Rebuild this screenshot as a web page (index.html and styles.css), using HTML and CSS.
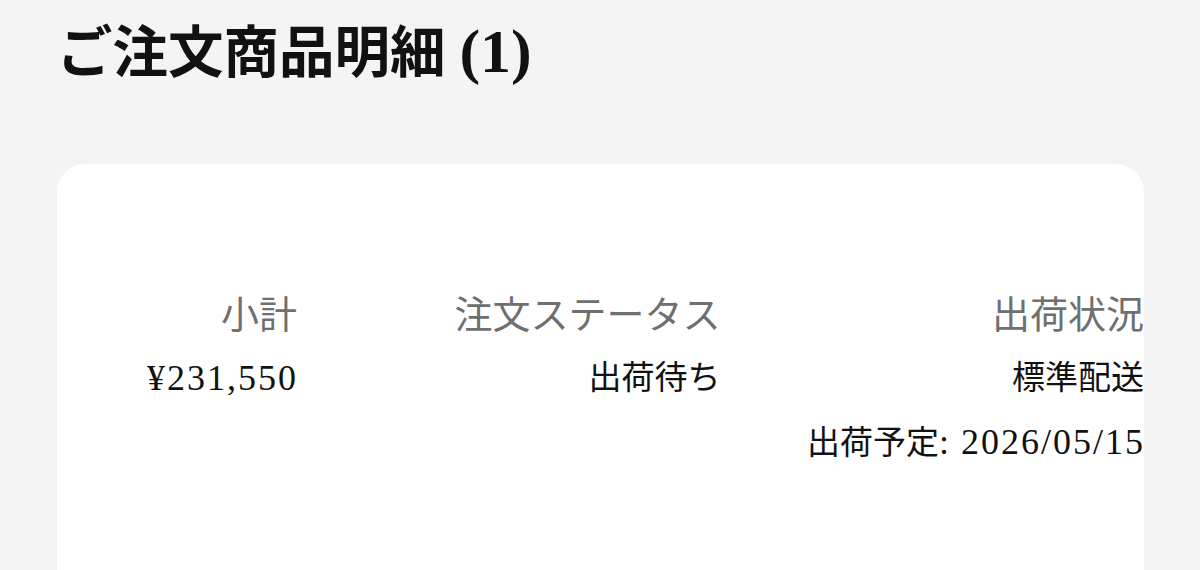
FILE: index.html
```html
<!doctype html>
<html lang="ja">
    <head>
        <meta charset="UTF-8" />
        <meta name="viewport" content="width=device-width, initial-scale=1.0" />
        <title>ご注文商品明細</title>
        <link rel="stylesheet" href="styles.css">
    </head>
    <body>
        <main class="page">
            <h1 class="title">ご注文商品明細 <span class="count">(1)</span></h1>

            <section class="card">
                <div class="summary">
                    <div class="cell">
                        <p class="label">小計</p>
                        <p class="value"><span class="num">¥231,550</span></p>
                    </div>

                    <div class="cell">
                        <p class="label">注文ステータス</p>
                        <p class="value">出荷待ち</p>
                    </div>

                    <div class="cell">
                        <p class="label">出荷状況</p>
                        <p class="value">標準配送</p>
                        <p class="value">出荷予定<span class="num">: </span><span class="num">2026/05/15</span></p>
                    </div>
                </div>
            </section>
        </main>
    </body>
</html>
```

FILE: styles.css
```css
* {
    margin: 0;
    padding: 0;
    box-sizing: border-box;
}
body {
    background: #f4f4f4;
    color: #111;
    font-family: "Liberation Serif", "Noto Sans CJK JP", serif;
    min-height: 100vh;
}

.page {
    padding: 19px 56px 0 57px;
}

.title {
    font-size: 55.5px;
    font-weight: 700;
    line-height: 64px;
    height: 145px;
}
.title .count {
    font-size: 62px;
}

.card {
    background: #fff;
    border-radius: 28px;
    min-height: 600px;
    padding-top: 124px;
}

.summary {
    display: grid;
    grid-template-columns: 240px 1fr 1fr;
}

.cell {
    text-align: right;
}

.label {
    color: #6f6f6f;
    font-size: 38px;
    line-height: 54px;
    margin-bottom: 4px;
}

.value {
    font-size: 33px;
    line-height: 64px;
    color: #111;
}

/* latin digits run a little wider than the kana beside them */
.num {
    font-size: 36px;
    letter-spacing: 2px;
    margin-right: -1px;
}
```
